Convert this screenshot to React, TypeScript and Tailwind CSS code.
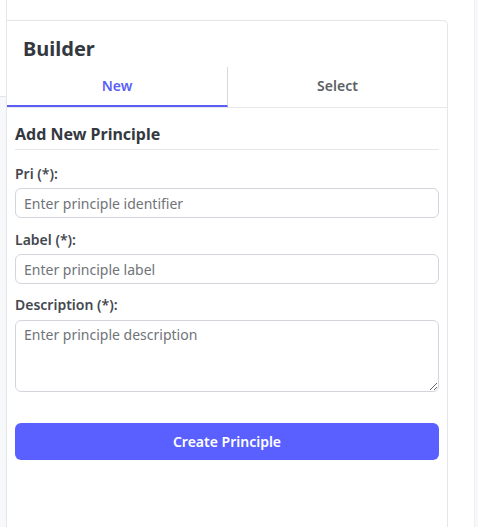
import React from "react";

export default function App() {
  const font = { fontFamily: '"Noto Sans", "Open Sans", sans-serif' };
  return (
    <div className="flex h-[527px] w-[478px] overflow-hidden bg-white" style={font}>
      <div className="flex w-[7px] shrink-0 flex-col border-r border-[#e4e6ea]">
        <div className="h-[97px] shrink-0 border-b border-[#e4e6ea] bg-white" />
        <div className="flex-1 bg-[#f7f8fa]" />
      </div>
      <div className="mt-[20px] flex w-[441px] shrink-0 flex-col rounded-tr-[5px] border-r border-t border-[#e4e6ea] bg-white">
        <div className="h-[46px] px-[16px] pt-[15px]">
          <h1 className="text-[20px] font-bold leading-[26px] text-[#343840]">Builder</h1>
        </div>
        <div className="flex h-[41px] border-b border-[#e5e7eb]">
          <div
            className="box-border flex w-[221px] items-center justify-center border-b-2 border-r border-[#5a5ff8] pb-[2px] text-[14px] font-semibold text-[#5a5ff8]"
            style={{ borderRightColor: "#d6d8dd" }}
          >
            New
          </div>
          <div className="flex flex-1 items-center justify-center pb-[4px] text-[14px] font-semibold text-[#5b5f66]">Select</div>
        </div>
        <div className="px-[8px] pt-[16px]">
          <h2 className="border-b border-[#e5e7eb] pb-[4px] text-[16px] font-bold leading-[21px] text-[#343840]">Add New Principle</h2>
          <div className="mt-[15px] flex flex-col">
            <label className="text-[14px] font-semibold leading-[18px] text-[#444850]">Pri (*):</label>
            <input
              className="mt-[5px] h-[30px] rounded-[6px] border border-[#d3d5db] px-[8px] text-[14px] text-[#333] outline-none placeholder:text-[#707378]"
              placeholder="Enter principle identifier"
            />
            <label className="mt-[13px] text-[14px] font-semibold leading-[18px] text-[#444850]">Label (*):</label>
            <input
              className="mt-[5px] h-[30px] rounded-[6px] border border-[#d3d5db] px-[8px] text-[14px] text-[#333] outline-none placeholder:text-[#707378]"
              placeholder="Enter principle label"
            />
            <label className="mt-[12px] text-[14px] font-semibold leading-[18px] text-[#444850]">Description (*):</label>
            <textarea
              className="mt-[6px] h-[72px] resize-y rounded-[6px] border border-[#d3d5db] px-[8px] py-[3px] text-[14px] text-[#333] outline-none placeholder:text-[#707378]"
              placeholder="Enter principle description"
            />
            <button className="mt-[31px] h-[37px] rounded-[6px] bg-[#5a60ff] text-[14px] font-semibold text-white">
              Create Principle
            </button>
          </div>
        </div>
      </div>
      <div className="w-[27px] shrink-0 border-r border-[#eceef1]" />
      <div className="flex-1 bg-[#f7f8fa]" />
    </div>
  );
}
